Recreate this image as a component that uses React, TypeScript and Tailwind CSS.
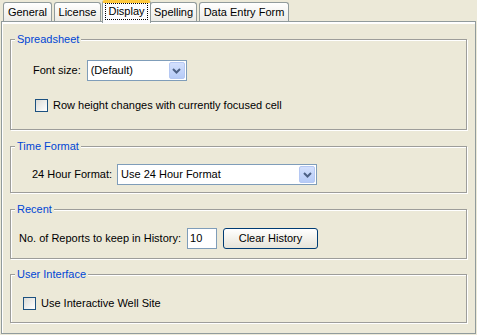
import React from "react";

const Chevron = () => (
  <svg width="9" height="6" viewBox="0 0 9 6">
    <path d="M1 1 L4.5 4.5 L8 1" fill="none" stroke="#4D6185" strokeWidth="2" />
  </svg>
);

const Select: React.FC<{ value: string; width: string }> = ({ value, width }) => (
  <div className={`flex items-center h-[21px] border border-[#7F9DB9] bg-white ${width}`}>
    <span className="flex-1 pl-[3px] whitespace-nowrap">{value}</span>
    <div className="flex items-center justify-center w-[16px] h-[17px] mr-[1px] rounded-[2px] border border-[#B5C8F3] bg-gradient-to-b from-[#D3E0FD] to-[#B6CBF7]">
      <Chevron />
    </div>
  </div>
);

const Checkbox: React.FC<{ label: string }> = ({ label }) => (
  <label className="flex items-center gap-[5px] h-[13px]">
    <span className="w-[13px] h-[13px] border border-[#1C5180] bg-gradient-to-br from-[#DCDCD7] to-white" />
    <span className="whitespace-nowrap">{label}</span>
  </label>
);

const Group: React.FC<{ title: string; className: string; children: React.ReactNode }> = ({
  title,
  className,
  children,
}) => (
  <div
    className={`relative w-[457px] border border-[#9D9D9A] shadow-[inset_1px_1px_0_#fff,1px_1px_0_#fff] ${className}`}
  >
    <span className="absolute -top-[8px] left-[4px] px-[2px] bg-[#ECE9D8] text-[#0046D5] leading-[14px]">
      {title}
    </span>
    {children}
  </div>
);

const tabs = ["General", "License", "Display", "Spelling", "Data Entry Form"];
const tabWidths = ["w-[49px]", "w-[47px]", "w-[49px]", "w-[47px]", "w-[90px]"];

export default function App() {
  return (
    <div className="w-[477px] h-[335px] bg-[#ECE9D8] text-[11px] text-black font-['Liberation_Sans',Arial,sans-serif] overflow-hidden">
      <div className="flex items-end h-[21px] pl-[3px]">
        {tabs.map((t, i) =>
          t === "Display" ? (
            <div
              key={t}
              className="relative z-10 -mb-[2px] flex items-start justify-center h-[23px] w-[49px] -mx-[1px] border-x border-[#919B9C] bg-[#FCFCFE] rounded-t-[3px] border-t-[3px] border-t-[#FFC83C]"
            >
              <span className="mt-[0px] px-[2px] leading-[15px] border border-dotted border-black">{t}</span>
            </div>
          ) : (
            <div
              key={t}
              className={`flex items-center justify-center h-[19px] mr-[2px] border border-b-0 border-[#919B9C] rounded-t-[3px] bg-gradient-to-b from-white to-[#ECEBE6] ${tabWidths[i]}`}
            >
              {t}
            </div>
          )
        )}
      </div>
      <div className="ml-[1px] w-[475px] h-[313px] border border-[#919B9C] shadow-[inset_1px_2px_0_#fff] pt-[17px] pl-[8px]">
        <Group title="Spreadsheet" className="h-[91px] pt-[20px]">
          <div className="flex items-center h-[21px] pl-[22px] gap-[6px]">
            <span>Font size:</span>
            <Select value="(Default)" width="w-[100px]" />
          </div>
          <div className="mt-[18px] pl-[24px]">
            <Checkbox label="Row height changes with currently focused cell" />
          </div>
        </Group>
        <Group title="Time Format" className="mt-[16px] h-[47px] pt-[17px]">
          <div className="flex items-center h-[21px] pl-[21px] gap-[5px]">
            <span>24 Hour Format:</span>
            <Select value="Use 24 Hour Format" width="w-[200px]" />
          </div>
        </Group>
        <Group title="Recent" className="mt-[16px] h-[50px] pt-[18px]">
          <div className="flex items-center h-[21px] pl-[8px]">
            <span>No. of Reports to keep in History:</span>
            <div className="ml-[6px] w-[30px] h-[21px] border border-[#7F9DB9] bg-white pl-[2px] flex items-center">
              10
            </div>
            <button className="ml-[6px] w-[95px] h-[21px] border border-[#003C74] rounded-[3px] bg-gradient-to-b from-white to-[#E6E4D9]">
              Clear History
            </button>
          </div>
        </Group>
        <Group title="User Interface" className="mt-[15px] h-[49px] pt-[22px]">
          <div className="pl-[12px]">
            <Checkbox label="Use Interactive Well Site" />
          </div>
        </Group>
      </div>
    </div>
  );
}
